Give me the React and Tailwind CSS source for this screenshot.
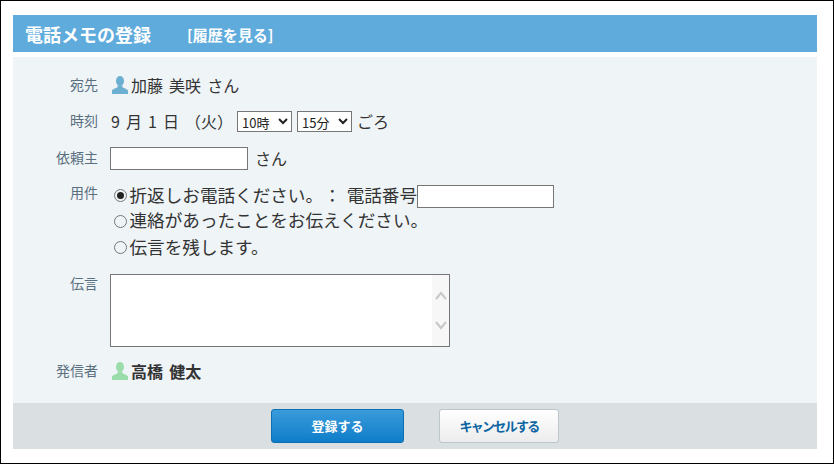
import React from 'react';

const font = { fontFamily: '"Noto Sans CJK JP", "Noto Sans", sans-serif' };

function Person({ color }) {
  return (
    <svg width="16" height="18" viewBox="0 0 16 18" className="shrink-0" fill={color}>
      <ellipse cx="8" cy="5" rx="4" ry="5" />
      <path d="M5.6 9.5 L10.4 9.5 L10.6 11.6 C13 12.6 16 13.4 16 15 L16 18 L0 18 L0 15 C0 13.4 3 12.6 5.4 11.6 Z" />
    </svg>
  );
}

function Radio({ checked, className }) {
  return (
    <span className={`w-[13px] h-[13px] rounded-full border border-[#777] bg-transparent flex items-center justify-center shrink-0 ${className}`}>
      {checked && <span className="w-[7px] h-[7px] rounded-full bg-[#222]" />}
    </span>
  );
}

function Row({ label, className, labelClass, children }) {
  return (
    <div className={`flex ${className}`}>
      <div className={`w-[85px] text-right text-[14px] leading-[18px] text-[#5a7080] shrink-0 ${labelClass}`}>{label}</div>
      <div className="ml-[12px] flex-1 text-[#333]">{children}</div>
    </div>
  );
}

function Select({ value, width }) {
  return (
    <select defaultValue={value} className={`${width} h-[21px] border border-[#767676] bg-white text-[13px] leading-none text-[#222]`}>
      <option>{value}</option>
    </select>
  );
}

export default function App() {
  return (
    <div className="w-[834px] h-[464px] bg-white border border-black pt-[14px] pl-[12px] pr-[16px] overflow-hidden" style={font}>
      <div className="h-[37px] bg-[#5eabdc] flex items-center pl-[12px] text-white font-bold">
        <span className="text-[18px] leading-none">電話メモの登録</span>
        <span className="ml-[36px] text-[15px] leading-none mt-[2px]">[履歴を見る]</span>
      </div>

      <div className="mt-[5px] h-[346px] bg-[#eff4f7] pt-[19px]">
        <Row label="宛先" labelClass="-mt-[1px]">
          <div className="flex items-center h-[18px] pl-[2px] gap-[3px] text-[16px] leading-none text-[#333] [word-spacing:2.5px]">
            <Person color="#6bb0d1" />
            <span>加藤 美咲 さん</span>
          </div>
        </Row>

        <Row label="時刻" className="mt-[17px]" labelClass="pt-[0px]">
          <div className="flex items-center h-[21px] text-[16px] leading-none">
            <span className="w-[127px] pl-[1px] -mt-[1px] whitespace-pre [word-spacing:2.5px]">9 月 1 日 （火）</span>
            <Select value="10時" width="w-[55px]" />
            <span className="w-[5px]" />
            <Select value="15分" width="w-[55px]" />
            <span className="ml-[5px] -mt-[1px]">ごろ</span>
          </div>
        </Row>

        <Row label="依頼主" className="mt-[15px]" labelClass="pt-[1px]">
          <div className="flex items-center h-[23px] text-[16px] leading-none">
            <input className="w-[138px] h-[23px] border border-[#767676] bg-white" />
            <span className="ml-[7px] -mt-[1px]">さん</span>
          </div>
        </Row>

        <Row label="用件" className="mt-[15px]" labelClass="-mt-[2px]">
          <div className="pl-[4px] text-[17.6px] leading-[27px] text-[#333]">
            <div className="flex items-center h-[23px] gap-[2.5px]">
              <Radio checked className="-mt-[3px]" />
              <span className="-mt-[4px]">折返しお電話ください。</span>
              <span className="-ml-[2px] -mt-[4px]">：</span>
              <span className="ml-[3px] -mt-[4px]">電話番号</span>
              <input className="w-[137px] h-[23px] border border-[#767676] bg-white -ml-[3px]" />
            </div>
            <div className="flex items-center h-[26px] gap-[2.5px]">
              <Radio />
              <span className="-mt-[3px]">連絡があったことをお伝えください。</span>
            </div>
            <div className="flex items-center h-[27px] gap-[2.5px]">
              <Radio />
              <span className="-mt-[3px]">伝言を残します。</span>
            </div>
          </div>
        </Row>

        <Row label="伝言" className="mt-[13px]" labelClass="pt-[0px]">
          <div className="relative w-[340px] h-[73px]">
            <textarea className="w-full h-full border border-[#767676] bg-white resize-none block" />
            <div className="absolute top-[1px] right-[1px] bottom-[1px] w-[17px] bg-[#f7f7f7] flex flex-col items-center justify-between py-[16px]">
              <svg width="12" height="9" viewBox="0 0 12 9" fill="none" stroke="#c9c9c9" strokeWidth="2.2"><path d="M1 8 L6 2 L11 8" /></svg>
              <svg width="12" height="9" viewBox="0 0 12 9" fill="none" stroke="#c9c9c9" strokeWidth="2.2"><path d="M1 1 L6 7 L11 1" /></svg>
            </div>
          </div>
        </Row>

        <Row label="発信者" className="mt-[15px]" labelClass="-mt-[1px]">
          <div className="flex items-center h-[18px] pl-[2px] gap-[3px] text-[16px] leading-none font-bold text-[#333] [word-spacing:2.5px]">
            <Person color="#9bdcab" />
            <span>高橋 健太</span>
          </div>
        </Row>
      </div>

      <div className="h-[46px] bg-[#dadfe2] flex items-center pl-[258px]">
        <button className="w-[133px] h-[34px] rounded-[3px] border border-[#0e70b0] bg-gradient-to-b from-[#389bdb] to-[#0b7dc9] text-white text-[13px] font-bold">登録する</button>
        <button className="ml-[35px] w-[120px] h-[34px] rounded-[3px] border border-[#bcc7cb] bg-gradient-to-b from-white to-[#ececec] text-[#0b65a3] text-[13px] font-bold tracking-[-1.7px]">キャンセルする</button>
      </div>
    </div>
  );
}
